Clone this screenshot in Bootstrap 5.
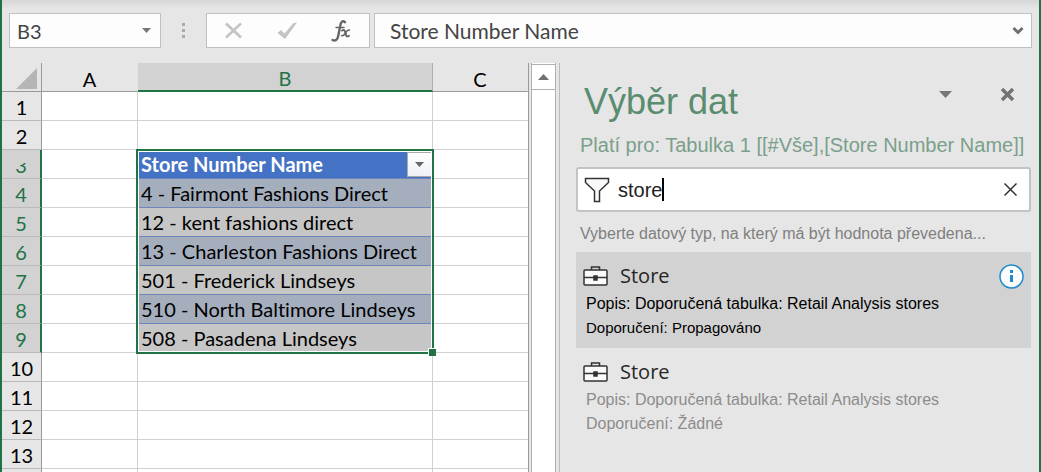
<!DOCTYPE html>
<html lang="cs">
<head>
<meta charset="utf-8">
<meta name="viewport" content="width=device-width, initial-scale=1">
<title>Výběr dat</title>
<link href="https://cdn.jsdelivr.net/npm/bootstrap@5.3.0/dist/css/bootstrap.min.css" rel="stylesheet">
<style>
  :root { --xl-green: #217346; --xl-gray: #e6e6e6; --xl-line: #d0d0d0; }
  body { background: var(--xl-gray); font-family: "Liberation Sans", sans-serif; color: #000; }
  button { background: none; border: 0; padding: 0; color: inherit; }
  svg { display: block; flex: none; }
  .workbook { border: solid var(--xl-green); border-width: 0 2px; }
  .formula-bar { padding: 13px 7px 15px; background: linear-gradient(#d6d6d6, var(--xl-gray) 9px); font: 21px/24px Lato, sans-serif; }
  .field-box { height: 35px; background: #fdfdfd; border: 1px solid #c0c0c0; }
  .field-box input { min-width: 0; border: 0; outline: 0; background: transparent; color: #444; padding: 0; }
  .name-box { width: 152px; padding: 0 9px 0 7px; font-size: 20px; }
  .bar-dots { width: 45px; }
  .fx-tools { width: 164px; margin-right: 4px; padding: 0 18px 0 17px; }
  .formula-box { padding: 0 7px 0 15px; }

  .sheet-area { flex: 0 0 527px; background: #fff; border-right: 1px solid #999; }
  .sheet { width: 526px; table-layout: fixed; border-collapse: separate; border-spacing: 0; font: 20px/24px Lato, sans-serif; font-variant-ligatures: none; }
  .sheet th, .sheet td { height: 29px; padding: 2px 0; border: solid var(--xl-line); border-width: 0 1px 1px 0; white-space: nowrap; }
  .sheet td:last-child { border-right: 0; }
  .sheet tr > th { font-weight: 400; text-align: center; background: var(--xl-gray); }
  .sheet thead th { border-color: var(--xl-gray); border-bottom-color: #999; padding: 3px 0 0; }
  .sheet thead th:first-child { border-right-color: #999; }
  .sheet tbody th { border-right-color: #999; border-bottom-color: #bbb; padding: 3px 0 1px; }
  .sheet thead th.picked { background: #d2d2d2; color: var(--xl-green); border-bottom: 2px solid var(--xl-green); border-right-color: #b0b0b0; }
  .sheet tbody th.picked { background: #d2d2d2; color: var(--xl-green); border-right: 2px solid var(--xl-green); }
  .sheet td.rec { padding-left: 3px; background: #c6c6c6; border-bottom-color: #6f87b8; }
  .sheet td.band { background: #a5aebd; }
  .sheet td.caption-cell { background: #4472c4; color: #fff; font-weight: 700; position: relative; }
  .range-frame { position: absolute; z-index: 1; left: -2px; right: -2px; top: -1px; height: 205px; border: 2px solid var(--xl-green); box-shadow: inset 0 0 0 1px #fff; pointer-events: none; }
  .range-frame::after { content: ""; position: absolute; right: -4px; bottom: -4px; width: 8px; height: 8px; background: var(--xl-green); border: solid #fff; border-width: 1px 0 0 1px; }
  .filter-btn { position: absolute; right: 0; top: 2px; width: 25px; height: 25px; border: 1px solid #aaa; background: linear-gradient(#fff, #eef1f6); }
  .cut-top { display: inline-block; clip-path: inset(10px 0 0 0); }

  .scroll-strip { flex: 0 0 25px; margin-left: 2px; background: #fff; border: solid #b0b0b0; border-width: 0 1px; }
  .scroll-strip button { width: 100%; height: 26px; border: solid #b0b0b0; border-width: 1px 0; margin-top: 1px; }
  .pane { border-left: 1px solid #bbb; margin-left: 3px; padding: 17px 8px 0 16px; }
  .pane h1 { font-size: 36px; line-height: 44px; color: #5a8c70; padding-left: 8px; }
  .pane h2 { font-size: 20px; line-height: 24px; color: #7a9f8b; padding-left: 4px; margin: 9px 0 10px; font-weight: 400; white-space: nowrap; }
  .pane-tools { padding-top: 3px; }
  .search-box { height: 45px; background: #fff; border: 2px solid #c3c3c3; border-radius: 3px; padding: 0 12px 0 6px; font-size: 20px; }
  .search-box input { min-width: 0; border: 0; outline: 0; padding: 0; color: #222; background: transparent; }
  .caret-host { position: relative; }
  .caret-host::after { content: ""; position: absolute; left: 44px; top: 3px; width: 2px; height: 23px; background: #000; }
  .hint { font-size: 16px; line-height: 20px; color: #7f7f7f; padding-left: 4px; margin: 12px 0 8px; white-space: nowrap; }
  .type-item { padding: 10px 7px; height: 96px; font-size: 16px; line-height: 24px; color: #8c8c8c; white-space: nowrap; }
  .type-item.active-type { background: #d2d2d2; color: #000; }
  .type-item h3 { font: 20px/28px "Open Sans", sans-serif; color: #262626; }
  .type-item dl { margin: 2px 0 0 3px; }
  .type-item p { margin: 0; }
  .type-text { padding: 2px 0 0 3px; }
  .active-type .advice { font-size: 15px; }
  .info-btn { margin-top: 1px; }
</style>
</head>
<body>
<div class="workbook vh-100 d-flex flex-column overflow-hidden">
  <header class="formula-bar d-flex align-items-center">
    <div class="field-box name-box d-flex align-items-center">
      <input class="flex-grow-1" aria-label="Pole názvů" value="B3">
      <button aria-label="Seznam názvů"><svg width="9" height="5"><path d="M0 0h9L4.500 5z" fill="#777"/></svg></button>
    </div>
    <div class="bar-dots d-flex justify-content-center"><svg width="3" height="16" fill="#aaa"><path d="M0 0h3v3H0zM0 6h3v3H0zM0 12h3v3H0z"/></svg></div>
    <div class="field-box fx-tools d-flex align-items-center justify-content-between">
      <button aria-label="Zrušit"><svg width="19" height="17" fill="none" stroke="#c4c4c4"><path d="M2 1.500l15 14" stroke-width="3"/><path d="M17 1.500l-15 14" stroke-width="2.500"/></svg></button>
      <button aria-label="Zadat"><svg width="20" height="17"><path d="M.5 11l3.500-3 3.500 3.500L16.500 1 20 .5 8 17z" fill="#c4c4c4"/></svg></button>
      <button aria-label="Vložit funkci"><svg width="20" height="22" fill="none" stroke="#666" stroke-linecap="round"><path d="M14 2.200C12-.2 9.800 2 9.200 6L7.200 16c-.7 4-3 5.500-5.700 4" stroke-width="2.400"/><path d="M5 7.500h8" stroke-width="1.500"/><path d="M11 10.500c2-1.200 2.600-.5 3.200 1.500l.8 3c.5 2 1.400 2 3 .8" stroke-width="2"/><path d="M18.500 10c-1.800-.6-2.800 1-4 3s-2.300 3.300-4 2.600" stroke-width="1.500"/></svg></button>
    </div>
    <div class="field-box formula-box d-flex align-items-center flex-grow-1">
      <input class="flex-grow-1" aria-label="Řádek vzorců" value="Store Number Name">
      <button aria-label="Rozbalit"><svg width="12" height="9"><path d="M1.500 2L6 6.500 10.500 2" fill="none" stroke="#6e6e6e" stroke-width="3"/></svg></button>
    </div>
  </header>

  <main class="d-flex flex-grow-1 overflow-hidden">
    <div class="sheet-area">
      <table class="sheet">
        <colgroup><col style="width:40px"><col style="width:96px"><col style="width:295px"><col style="width:95px"></colgroup>
        <thead>
          <tr><th aria-label="Vybrat vše"><svg class="ms-auto me-1" width="21" height="21"><path d="M21 0v21H0z" fill="#b5b5b5"/></svg></th><th>A</th><th class="picked">B</th><th>C</th></tr>
        </thead>
        <tbody>
          <tr><th>1</th><td></td><td></td><td></td></tr>
          <tr><th>2</th><td></td><td></td><td></td></tr>
          <tr><th class="picked"><span class="cut-top">3</span></th><td></td><td class="rec caption-cell">Store Number Name<button class="filter-btn d-flex align-items-center justify-content-center" aria-label="Filtr"><svg width="9" height="5"><path d="M0 0h9L4.500 5z" fill="#666"/></svg></button><span class="range-frame"></span></td><td></td></tr>
          <tr><th class="picked">4</th><td></td><td class="rec band">4 - Fairmont Fashions Direct</td><td></td></tr>
          <tr><th class="picked">5</th><td></td><td class="rec">12 - kent fashions direct</td><td></td></tr>
          <tr><th class="picked">6</th><td></td><td class="rec band">13 - Charleston Fashions Direct</td><td></td></tr>
          <tr><th class="picked">7</th><td></td><td class="rec">501 - Frederick Lindseys</td><td></td></tr>
          <tr><th class="picked">8</th><td></td><td class="rec band">510 - North Baltimore Lindseys</td><td></td></tr>
          <tr><th class="picked">9</th><td></td><td class="rec">508 - Pasadena Lindseys</td><td></td></tr>
          <tr><th>10</th><td></td><td></td><td></td></tr>
          <tr><th>11</th><td></td><td></td><td></td></tr>
          <tr><th>12</th><td></td><td></td><td></td></tr>
          <tr><th>13</th><td></td><td></td><td></td></tr>
          <tr><th></th><td></td><td></td><td></td></tr>
        </tbody>
      </table>
    </div>
    <div class="scroll-strip">
      <button class="d-flex align-items-center justify-content-center" aria-label="Posunout nahoru"><svg width="11" height="6"><path d="M0 6h11L5.500 0z" fill="#707070"/></svg></button>
    </div>

    <aside class="pane flex-grow-1">
      <div class="d-flex justify-content-between">
        <h1 class="mb-0 fw-normal">Výběr dat</h1>
        <div class="pane-tools d-flex align-items-start pe-3">
          <button class="mt-2 me-5" aria-label="Možnosti podokna"><svg width="13" height="8"><path d="M0 0h13L6.500 7z" fill="#777"/></svg></button>
          <button class="mt-1" aria-label="Zavřít"><svg width="15" height="15"><path d="M2 2l11 11M13 2L2 13" stroke="#737373" stroke-width="3.500"/></svg></button>
        </div>
      </div>
      <h2>Platí pro: Tabulka 1 [[#Vše],[Store Number Name]]</h2>
      <div class="search-box d-flex align-items-center">
        <svg width="26" height="26"><path d="M1.500 1.500h23v4l-9 8.500v10.500h-5V14l-9-8.500z" fill="#fafafa" stroke="#333" stroke-width="1.500"/></svg>
        <div class="caret-host flex-grow-1 ms-2 d-flex"><input class="w-100" aria-label="Hledat" value="store"></div>
        <button aria-label="Vymazat"><svg width="13" height="13"><path d="M.5.5l12 12M12.500.5l-12 12" stroke="#333" stroke-width="1.500"/></svg></button>
      </div>
      <p class="hint">Vyberte datový typ, na který má být hodnota převedena...</p>
      <section class="type-item active-type">
        <div class="d-flex align-items-center">
          <svg width="25" height="20" fill="#fafafa" stroke="#333" stroke-width="1.500"><path d="M8.500 4V1h8v3" fill="none"/><rect x="1" y="4" width="23" height="15" rx="1"/><path d="M1 11.500h23"/><rect x="11" y="10" width="3" height="4" fill="#333"/></svg>
          <h3 class="mb-0 ms-2 ps-1">Store</h3>
          <button class="info-btn ms-auto" aria-label="Informace"><svg width="25" height="25"><circle cx="12.500" cy="12.500" r="11.500" fill="#fcfcfc" stroke="#1e8bcd" stroke-width="1.500"/><path d="M11 6h3v3h-3zM11 11h3v7h-3z" fill="#1e8bcd"/></svg></button>
        </div>
        <div class="type-text">
          <p>Popis: Doporučená tabulka: Retail Analysis stores</p>
          <p class="advice">Doporučení: Propagováno</p>
        </div>
      </section>
      <section class="type-item">
        <div class="d-flex align-items-center">
          <svg width="25" height="20" fill="#fafafa" stroke="#333" stroke-width="1.500"><path d="M8.500 4V1h8v3" fill="none"/><rect x="1" y="4" width="23" height="15" rx="1"/><path d="M1 11.500h23"/><rect x="11" y="10" width="3" height="4" fill="#333"/></svg>
          <h3 class="mb-0 ms-2 ps-1">Store</h3>
        </div>
        <div class="type-text">
          <p>Popis: Doporučená tabulka: Retail Analysis stores</p>
          <p class="advice">Doporučení: Žádné</p>
        </div>
      </section>
    </aside>
  </main>
</div>
<script src="https://cdn.jsdelivr.net/npm/bootstrap@5.3.0/dist/js/bootstrap.bundle.min.js"></script>
</body>
</html>
